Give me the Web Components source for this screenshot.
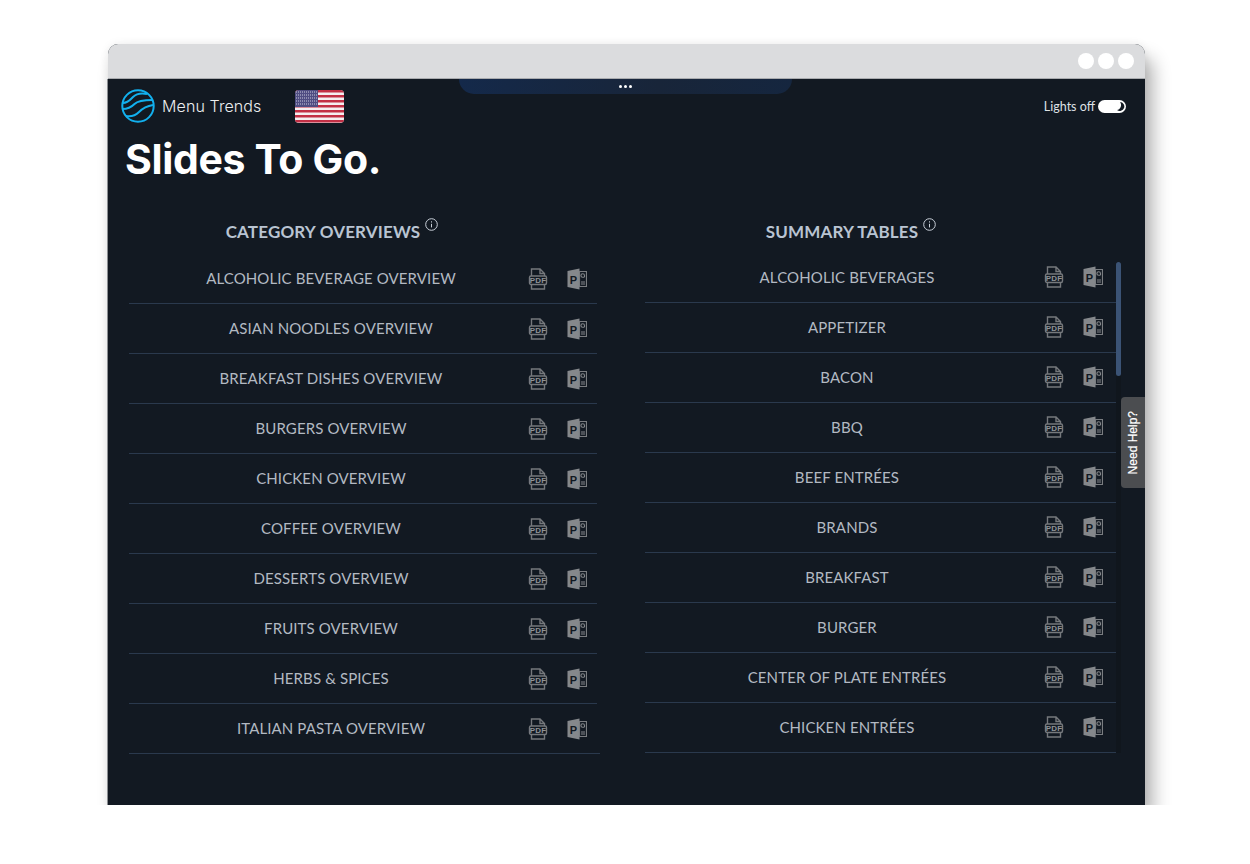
<!DOCTYPE html>
<html>
<head>
<meta charset="utf-8">
<title>Slides To Go</title>
<style>
  html, body { margin: 0; background: #fff; }
  body { font-family: "Lato", "Liberation Sans", sans-serif; }
</style>
</head>
<body>
<app-window>
  <top-nav></top-nav>
  <h1 slot="title">Slides To Go.</h1>
  <list-panel slot="cols" heading="CATEGORY OVERVIEWS" style="--row-w:468px; --head-pad:62px">
    <list-row>ALCOHOLIC BEVERAGE OVERVIEW</list-row>
    <list-row>ASIAN NOODLES OVERVIEW</list-row>
    <list-row>BREAKFAST DISHES OVERVIEW</list-row>
    <list-row>BURGERS OVERVIEW</list-row>
    <list-row>CHICKEN OVERVIEW</list-row>
    <list-row>COFFEE OVERVIEW</list-row>
    <list-row>DESSERTS OVERVIEW</list-row>
    <list-row>FRUITS OVERVIEW</list-row>
    <list-row>HERBS &amp; SPICES</list-row>
    <list-row style="margin-right:-3px">ITALIAN PASTA OVERVIEW</list-row>
  </list-panel>
  <list-panel slot="cols" heading="SUMMARY TABLES" scrolling style="--row-w:471px; --head-pad:59px">
    <list-row>ALCOHOLIC BEVERAGES</list-row>
    <list-row>APPETIZER</list-row>
    <list-row>BACON</list-row>
    <list-row>BBQ</list-row>
    <list-row>BEEF ENTRÉES</list-row>
    <list-row>BRANDS</list-row>
    <list-row>BREAKFAST</list-row>
    <list-row>BURGER</list-row>
    <list-row>CENTER OF PLATE ENTRÉES</list-row>
    <list-row>CHICKEN ENTRÉES</list-row>
  </list-panel>
</app-window>

<script>
class AppWindow extends HTMLElement {
  connectedCallback() {
    this.attachShadow({ mode: "open" });
    this.shadowRoot.innerHTML = `
      <style>
        :host {
          display: block;
          position: relative;
          width: 1037px;
          height: 761px;
          margin: 44px 0 0 108px;
          border-radius: 10px 10px 0 0;
          background: #121922;
          box-shadow: 8px 14px 18px rgba(0, 0, 0, 0.3), 0 0 10px rgba(0, 0, 0, 0.07);
          color: #fff;
        }
        /* thin grey edge on the dark part of the window */
        :host::after {
          content: "";
          position: absolute;
          top: 35px;
          left: -1px;
          right: 0;
          bottom: -1px;
          border-left: 1px solid #8c8f93;
          border-bottom: 1px solid #8c8f93;
          pointer-events: none;
        }
        .bar {
          display: flex;
          justify-content: flex-end;
          align-items: center;
          gap: 4px;
          height: 34px;
          padding-right: 11px;
          background: #dbdcde;
          border-bottom: 1px solid #a9abae;
          border-radius: 10px 10px 0 0;
        }
        .bar i {
          width: 16px;
          height: 16px;
          border-radius: 50%;
          background: #fff;
        }
        .tab {
          position: absolute;
          top: 35px;
          left: 351px;
          width: 333px;
          height: 15px;
          display: flex;
          justify-content: center;
          align-items: center;
          gap: 2px;
          background: linear-gradient(90deg, #14294a, #182539 60%, #15263f);
          border-radius: 0 0 16px 16px;
        }
        .tab i {
          width: 3px;
          height: 3px;
          border-radius: 50%;
          background: #fff;
        }
        .help {
          position: absolute;
          top: 353px;
          right: 0;
          width: 24px;
          height: 91px;
          display: flex;
          align-items: center;
          justify-content: center;
          background: #4b4d50;
          border-radius: 4px 0 0 4px;
          font: 12px "Liberation Sans", sans-serif;
          -webkit-text-stroke: 0.2px #fff;
        }
        .help span {
          writing-mode: vertical-rl;
          transform: rotate(180deg);
        }
        ::slotted(h1) {
          margin: 0 0 0 17px;
          padding-top: 4px;
          height: 75px;
          font: 700 41px/44px "Inter", "Liberation Sans", sans-serif;
          letter-spacing: -0.35px;
        }
        .cols {
          display: flex;
          align-items: flex-start;
          padding-left: 21px;
          gap: 48px;
        }
      </style>
      <div class="bar"><i></i><i></i><i></i></div>
      <slot></slot>
      <slot name="title"></slot>
      <div class="cols"><slot name="cols"></slot></div>
      <div class="tab"><i></i><i></i><i></i></div>
      <div class="help"><span>Need Help?</span></div>
    `;
  }
}

class TopNav extends HTMLElement {
  connectedCallback() {
    this.attachShadow({ mode: "open" });
    this.shadowRoot.innerHTML = `
      <style>
        :host {
          display: flex;
          align-items: center;
          height: 54px;
          padding: 0 19px 0 13px;
        }
        .logo { width: 34px; height: 34px; }
        .name {
          margin-left: 7px;
          width: 133px;
          font: 300 16px "Inter", "Liberation Sans", sans-serif;
          letter-spacing: 0.1px;
          color: #eceef0;
        }
        .flag { width: 49px; height: 33px; }
        .lights {
          margin-left: auto;
          display: flex;
          align-items: center;
          gap: 3px;
          font-size: 12.5px;
          color: #dfe2e6;
        }
        .switch { width: 28px; height: 13px; }
      </style>
      <svg class="logo" viewBox="0 0 34 34" fill="none" stroke="#12b0ee" stroke-width="2">
        <circle cx="17" cy="17" r="15.7"/>
        <path d="M2 14c5 0 7-3 10-6s9-4 14-3"/>
        <path d="M1.500 20c6 0 9-2 12-5s8-4 18-4"/>
        <path d="M5 27c6 1 10-1 13-4s8-6 14-7"/>
      </svg>
      <span class="name">Menu Trends</span>
      <svg class="flag" viewBox="0 0 49 33">
        <clipPath id="r"><rect width="49" height="33" rx="4"/></clipPath>
        <g clip-path="url(#r)">
          <rect width="49" height="33" fill="#f4eef0"/>
          <path d="M0 1.300h49M0 6.300h49M0 11.300h49M0 16.300h49M0 21.300h49M0 26.300h49M0 31.300h49" stroke="#c22f45" stroke-width="2.500"/>
          <rect width="23" height="17" fill="#4f4d82"/>
          <path d="M1 2h21M1 5h21M1 8h21M1 11h21M1 14h21" stroke="#c9c9dc" stroke-width="1.200" stroke-dasharray="1 1"/>
        </g>
      </svg>
      <span class="lights">Lights off
        <svg class="switch" viewBox="0 0 28 13">
          <rect width="28" height="13" rx="6.500" fill="#fff"/>
          <path d="M22 2a4.500 4.500 0 1 1-3 8 5 5 0 0 0 3-8z" fill="#121922"/>
        </svg>
      </span>
    `;
  }
}

class ListPanel extends HTMLElement {
  connectedCallback() {
    this.attachShadow({ mode: "open" });
    const scrolling = this.hasAttribute("scrolling");
    this.shadowRoot.innerHTML = `
      <style>
        :host {
          display: block;
          position: relative;
          width: var(--row-w);
        }
        h2 {
          display: flex;
          justify-content: center;
          gap: 5px;
          margin: 0;
          height: 42px;
          padding: 8px var(--head-pad) 0 0;
          box-sizing: border-box;
          font: 700 17px/24px "Lato", "Liberation Sans", sans-serif;
          letter-spacing: 0.17px;
          color: #b9c4d2;
        }
        h2 svg { width: 13px; height: 13px; margin-top: -2px; }
        .rows { display: block; margin-top: ${scrolling ? "-1.500px" : "0"}; }
        .track {
          position: absolute;
          top: 50px;
          bottom: 0;
          right: -5px;
          width: 5px;
          background: #10161d;
        }
        .thumb {
          position: absolute;
          top: 0;
          left: 0;
          width: 5px;
          height: 114px;
          border-radius: 3px;
          background: #3b5375;
        }
      </style>
      <h2>${this.getAttribute("heading")}
        <svg viewBox="0 0 13 13" fill="none" stroke="#c9d0d9">
          <circle cx="6.500" cy="6.500" r="5.800"/>
          <path d="M6.500 5.800v3.600M6.500 3.300v1.200"/>
        </svg>
      </h2>
      <div class="rows"><slot></slot></div>
      ${scrolling ? '<div class="track"><div class="thumb"></div></div>' : ""}
    `;
  }
}

class ListRow extends HTMLElement {
  connectedCallback() {
    this.attachShadow({ mode: "open" });
    this.shadowRoot.innerHTML = `
      <style>
        :host {
          display: flex;
          align-items: center;
          height: 50px;
          box-sizing: border-box;
          border-bottom: 1px solid #2a394d;
          font: 400 15px "Lato", "Liberation Sans", sans-serif;
          letter-spacing: 0.12px;
          color: #b3b9c2;
        }
        .label { width: 404px; padding-bottom: 1px; text-align: center; }
        .icons { display: flex; gap: 19px; margin-left: -5px; }
        svg { width: 20px; height: 22px; display: block; }
      </style>
      <span class="label"><slot></slot></span>
      <span class="icons">
        <svg viewBox="0 0 20 22" fill="none" stroke="#75787c" stroke-width="1.400">
          <path d="M3.500 8V1h8.500L16.500 5.500V8M3.500 16.500V21h13v-4.500M12 1v4.500h4.500"/>
          <rect x="1.500" y="8" width="17" height="8.500" rx="1.500"/>
          <text x="10" y="15.100" text-anchor="middle" font-family="Liberation Sans, sans-serif" font-size="8" font-weight="700" fill="#8f9296" stroke="none">PDF</text>
        </svg>
        <svg viewBox="0 0 20 22" fill="#85888c">
          <path d="M0.500 3l12-2.500v21l-12-2.500z"/>
          <path d="M12.500 3.500h7v15h-7z" fill="none" stroke="#7a7d81" stroke-width="1.200"/>
          <path d="M14 14h4M14 16h4" stroke="#85888c"/>
          <path d="M17.500 9V7.500a1.800 1.800 0 1 0-1.800 1.800h1.800" fill="none" stroke="#85888c" stroke-width="1.100"/>
          <text x="6.500" y="15.500" text-anchor="middle" font-family="Liberation Sans, sans-serif" font-size="11" font-weight="700" fill="#121922">P</text>
        </svg>
      </span>
    `;
  }
}

customElements.define("app-window", AppWindow);
customElements.define("top-nav", TopNav);
customElements.define("list-panel", ListPanel);
customElements.define("list-row", ListRow);
</script>
</body>
</html>
